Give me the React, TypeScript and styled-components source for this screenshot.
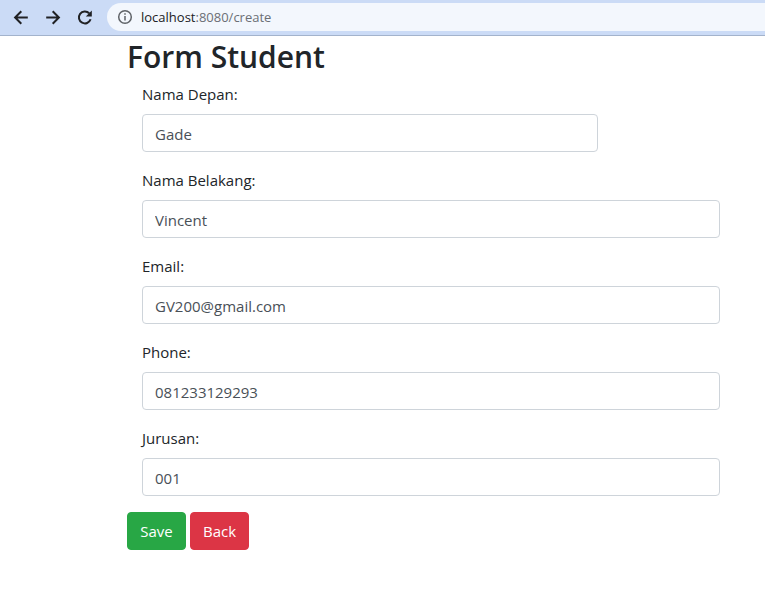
import React from 'react';
import styled, { createGlobalStyle } from 'styled-components';

const GlobalStyle = createGlobalStyle`
  *, *::before, *::after { box-sizing: border-box; }
  body {
    margin: 0;
    background: #fff;
    color: #212529;
    font: 400 15px/24px "Open Sans", "Noto Sans", sans-serif;
  }
`;

const Toolbar = styled.header`
  display: flex;
  align-items: center;
  height: 36px;
  padding-left: 12px;
  background: #cbdbf6;
  border-bottom: 1px solid #a3b3cc;
`;

const NavButton = styled.button`
  display: flex;
  width: 18px;
  height: 18px;
  margin-right: 14px;
  padding: 0;
  border: 0;
  background: none;
  color: #202124;

  &:last-of-type { margin-right: 13px; }
`;

const AddressBar = styled.div`
  display: flex;
  flex: 1;
  align-items: center;
  gap: 8px;
  height: 28px;
  margin-bottom: 1px;
  padding-left: 10px;
  border-radius: 14px 0 0 14px;
  background: #f3f7fd;
  color: #5f6368;
`;

const Address = styled.div`
  font-size: 13px;
  line-height: 20px;
  color: #6b6f75;
`;

const Host = styled.span`
  color: #202124;
`;

const Page = styled.main`
  margin: 0 30px 0 127px;
`;

const Title = styled.h1`
  margin: 0;
  padding-top: 2px;
  font-size: 30px;
  line-height: 38px;
  font-weight: 600;
`;

const Form = styled.form`
  padding-top: 6px;
`;

const Field = styled.div<{ $short?: boolean }>`
  display: flex;
  flex-direction: column;
  gap: 8px;
  width: ${(p) => (p.$short ? '80%' : '100%')};
  padding: 0 15px;
  margin-bottom: 16px;
`;

const Label = styled.label`
  line-height: 24px;
`;

const TextInput = styled.input`
  width: 100%;
  height: 38px;
  padding: 7px 12px 5px;
  border: 1px solid #ced4da;
  border-radius: 4px;
  background: #fff;
  color: #495057;
  font: inherit;
`;

const Actions = styled.footer`
  display: flex;
  gap: 4px;
`;

const Button = styled.button<{ $color: string }>`
  min-width: 59px;
  height: 38px;
  padding: 6px 11px;
  border: 1px solid ${(p) => p.$color};
  border-radius: 4px;
  background: ${(p) => p.$color};
  color: #fff;
  font: inherit;
`;

const fields = [
  { id: 'first', label: 'Nama Depan:', value: 'Gade', short: true },
  { id: 'last', label: 'Nama Belakang:', value: 'Vincent' },
  { id: 'email', label: 'Email:', value: 'GV200@gmail.com' },
  { id: 'phone', label: 'Phone:', value: '081233129293' },
  { id: 'major', label: 'Jurusan:', value: '001' },
];

export default function App() {
  return (
    <>
      <GlobalStyle />
      <Toolbar>
        <NavButton aria-label="Back">
          <svg width="18" height="18" viewBox="0 0 18 18" fill="none" stroke="currentColor" strokeWidth="2">
            <path d="M15.800 8.500H3.500M9.300 2.300L3.100 8.500l6.200 6.200" />
          </svg>
        </NavButton>
        <NavButton aria-label="Forward">
          <svg width="18" height="18" viewBox="0 0 18 18" fill="none" stroke="currentColor" strokeWidth="2">
            <path d="M2.200 8.500h12.300M8.700 2.300l6.200 6.200l-6.200 6.200" />
          </svg>
        </NavButton>
        <NavButton aria-label="Reload">
          <svg width="18" height="18" viewBox="0 0 18 18">
            <path d="M13.200 4.200A6 6 0 1 0 14.600 10.300" fill="none" stroke="currentColor" strokeWidth="2" />
            <path d="M15.800 1.500v6h-6z" fill="currentColor" />
          </svg>
        </NavButton>
        <AddressBar>
          <svg width="16" height="16" viewBox="0 0 16 16" fill="none" stroke="currentColor" strokeWidth="1.500">
            <circle cx="8" cy="8" r="6.300" />
            <path d="M8 7v4.500M8 4.300v1.500" />
          </svg>
          <Address><Host>localhost</Host>:8080/create</Address>
        </AddressBar>
      </Toolbar>
      <Page>
        <Title>Form Student</Title>
        <Form>
          {fields.map((f) => (
            <Field key={f.id} $short={f.short}>
              <Label htmlFor={f.id}>{f.label}</Label>
              <TextInput id={f.id} defaultValue={f.value} />
            </Field>
          ))}
          <Actions>
            <Button type="button" $color="#28a745">Save</Button>
            <Button type="button" $color="#dc3545">Back</Button>
          </Actions>
        </Form>
      </Page>
    </>
  );
}
